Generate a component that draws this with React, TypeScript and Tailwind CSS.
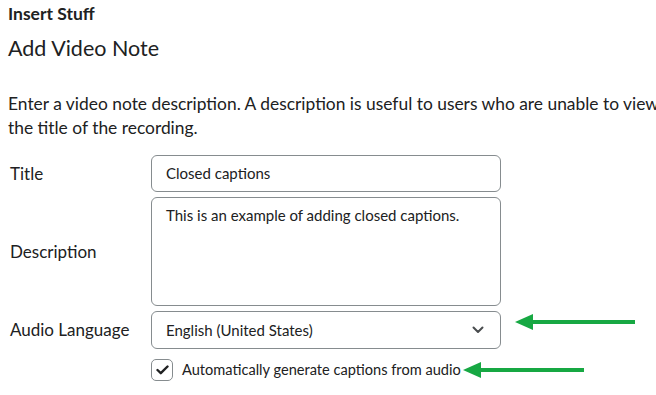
import React from "react";

const Arrow: React.FC<{ length: number }> = ({ length }) => (
  <svg width={length} height="20" viewBox={`0 0 ${length} 20`} className="shrink-0">
    <line x1="14" y1="10" x2={length} y2="10" stroke="#17a843" strokeWidth="4" />
    <polygon points="0,10 18,2 18,18" fill="#17a843" />
  </svg>
);

export default function App() {
  return (
    <div className="w-[656px] h-[395px] overflow-hidden bg-white text-[#202122] font-['Lato','Noto_Sans',sans-serif]">
      <div className="pl-2 pt-[3px] text-[17.5px] font-bold leading-[22px]">Insert Stuff</div>
      <div className="pl-2 pt-[10px] text-[21.5px] leading-[26px]">Add Video Note</div>

      <p className="pl-2 pt-[31px] text-[17.4px] leading-[24px] whitespace-nowrap">
        Enter a video note description. A description is useful to users who are unable to view
        <br />
        the title of the recording.
      </p>

      <div className="mt-[15px] pl-[10px] grid grid-cols-[141px_350px] gap-y-[5px] items-center text-[17px]">
        <div>Title</div>
        <div className="h-[37px] border border-[#868c8f] rounded-md flex items-center px-[14px] text-[15px]">
          Closed captions
        </div>

        <div>Description</div>
        <div className="h-[109px] border border-[#868c8f] rounded-md px-[14px] pt-[6px] text-[15px]">
          This is an example of adding closed captions.
        </div>

        <div>Audio Language</div>
        <div className="relative">
          <div className="h-[38px] border border-[#868c8f] rounded-md flex items-center justify-between px-[14px] text-[15px]">
            <span>English (United States)</span>
            <svg width="12" height="8" viewBox="0 0 12 8" className="mr-[2px]">
              <path d="M1.5 1.5 L6 6 L10.5 1.5" fill="none" stroke="#494c4e" strokeWidth="2" strokeLinecap="round" strokeLinejoin="round" />
            </svg>
          </div>
          <div className="absolute left-[364px] top-[1px]">
            <Arrow length={120} />
          </div>
        </div>

        <div />
        <div className="flex items-center mt-[5px]">
          <div className="shrink-0 w-[22px] h-[22px] border border-[#868c8f] rounded-[5px] flex items-center justify-center">
            <svg width="13" height="10" viewBox="0 0 13 10">
              <path d="M1.5 5 L4.8 8.2 L11.5 1.5" fill="none" stroke="#202122" strokeWidth="2.4" strokeLinecap="round" strokeLinejoin="round" />
            </svg>
          </div>
          <span className="ml-[9px] text-[14.6px] whitespace-nowrap">Automatically generate captions from audio</span>
          <div className="ml-[2px]">
            <Arrow length={121} />
          </div>
        </div>
      </div>
    </div>
  );
}
